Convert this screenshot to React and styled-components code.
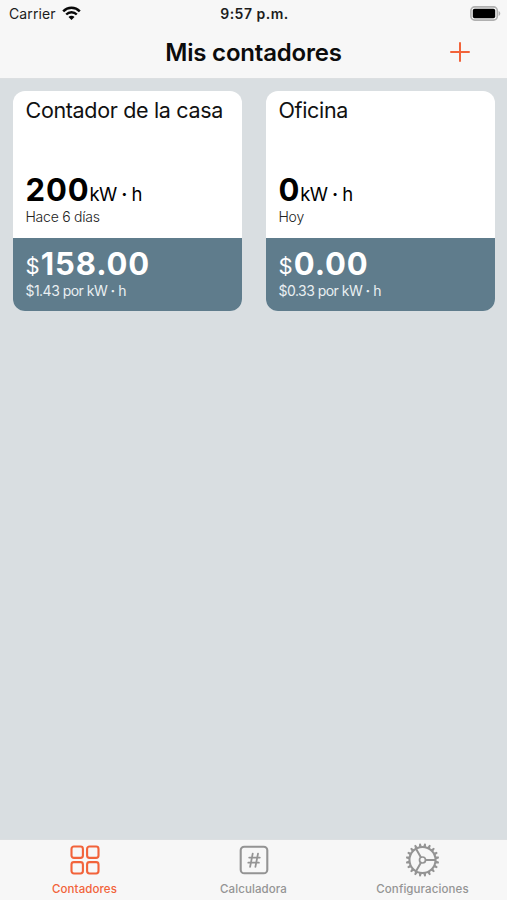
import React, { useState } from 'react';
import styled, { createGlobalStyle } from 'styled-components';

const GlobalStyle = createGlobalStyle`
  * {
    box-sizing: border-box;
  }

  body {
    margin: 0;
    font-family: Inter, "Liberation Sans", sans-serif;
    background: #d9dee1;
  }
`;

const Screen = styled.div`
  display: flex;
  flex-direction: column;
  height: 100vh;
  overflow: hidden;
  background: #d9dee1;
`;

const Header = styled.header`
  height: 79px;
  background: #f7f7f7;
  border-bottom: 1px solid #dcdfe1;
`;

const StatusBar = styled.div`
  display: grid;
  grid-template-columns: 1fr auto 1fr;
  align-items: center;
  height: 28px;
  padding: 0 7px 0 9px;
  font-size: 14px;
  line-height: 28px;
  color: #1c1c1c;
`;

const Carrier = styled.div`
  display: flex;
  align-items: center;
  gap: 6px;
  letter-spacing: 0.1px;

  svg {
    margin-bottom: 2px;
  }
`;

const Clock = styled.div`
  font-weight: 600;
  letter-spacing: 0.5px;
`;

const BatterySlot = styled.div`
  display: flex;
  justify-content: flex-end;
  margin: -2px -1px 0 0;
`;

const NavBar = styled.div`
  display: grid;
  grid-template-columns: 1fr auto 1fr;
  align-items: center;
  height: 48px;
  padding: 0 36px;
`;

const Title = styled.h1`
  grid-column: 2;
  margin: 0;
  padding-top: 1px;
  font-size: 24px;
  font-weight: 600;
  line-height: 48px;
  letter-spacing: -0.2px;
  color: #0c0c0c;
`;

const AddButton = styled.button`
  justify-self: end;
  display: flex;
  margin-bottom: 2px;
  padding: 0;
  border: 0;
  background: none;
  color: #f2633a;
`;

const Grid = styled.main`
  flex: 1;
  display: grid;
  grid-template-columns: 1fr 1fr;
  align-content: start;
  gap: 24px;
  padding: 12px 12px 0 13px;
`;

const Card = styled.article`
  height: 220px;
  border-radius: 12px;
  overflow: hidden;
  background: #fff;
`;

const Usage = styled.div`
  display: flex;
  flex-direction: column;
  justify-content: space-between;
  height: 147px;
  padding: 6px 12px 13px 12.5px;
`;

const Cost = styled.div`
  height: 73px;
  padding: 8px 12px 0 12.5px;
  background: #5f7c8c;
  color: #fff;
`;

const CardTitle = styled.h2`
  margin: 0;
  font-size: 21.5px;
  font-weight: 400;
  line-height: 27px;
  letter-spacing: -0.33px;
  color: #111;
  white-space: nowrap;
`;

const Amount = styled.div`
  height: 36px;
  font-size: 31px;
  font-weight: 700;
  line-height: 36px;
  letter-spacing: 0.9px;
  white-space: nowrap;
`;

const Unit = styled.span`
  font-size: 18.5px;
  font-weight: 400;
  letter-spacing: -0.6px;
`;

const Dot = styled.span`
  font-weight: 700;
`;

const Currency = styled.span`
  margin-right: 1.2px;
  font-size: 22px;
  font-weight: 400;
  letter-spacing: 0;
  vertical-align: 1px;
  line-height: 1;
`;

const Note = styled.div`
  font-size: 14px;
  font-weight: ${(props) => (props.$light ? 400 : 300)};
  line-height: 17px;
  letter-spacing: ${(props) => (props.$light ? '-0.53px' : '-0.25px')};
  color: ${(props) => (props.$light ? '#e9eff2' : '#222')};
`;

const TabBar = styled.nav`
  display: grid;
  grid-template-columns: repeat(3, 1fr);
  height: 61px;
  background: #f7f7f7;
  border-top: 1px solid #dcdfe1;
`;

const Tab = styled.button`
  display: flex;
  flex-direction: column;
  align-items: center;
  padding: 2px 0 0;
  border: 0;
  background: none;
  font-family: inherit;
  font-size: 11.5px;
  font-weight: 500;
  line-height: 16px;
  letter-spacing: 0.1px;
  color: ${(props) => (props.$active ? '#f2633a' : '#949494')};

  svg {
    margin-bottom: 3px;
  }
`;

const WifiIcon = () => (
  <svg width="19" height="15" viewBox="0 0 19 15" fill="none" stroke="#080808">
    <path d="M1.2 5.3a11.7 11.7 0 0 1 16.6 0" strokeWidth="2.5" />
    <path d="M4.2 8.5a7.5 7.5 0 0 1 10.6 0" strokeWidth="2.4" />
    <path d="M9.5 14l-3-3.1a4.2 4.2 0 0 1 6 0z" fill="#080808" stroke="none" />
  </svg>
);

const BatteryIcon = () => (
  <svg width="31" height="15" viewBox="0 0 31 15">
    <rect x="0.9" y="0.9" width="26.4" height="13.2" rx="3.8" fill="#f7f7f7" stroke="#b0b0b0" strokeWidth="1.6" />
    <rect x="2.8" y="2.8" width="22.4" height="9.4" rx="1.8" fill="#000" />
    <path d="M28.6 5c2.2 1 2.2 4 0 5z" fill="#b0b0b0" />
  </svg>
);

const PlusIcon = () => (
  <svg width="22" height="22" viewBox="0 0 22 22" stroke="currentColor" strokeWidth="2" strokeLinecap="round">
    <path d="M11 2v18M2 11h18" />
  </svg>
);

const GridIcon = () => (
  <svg width="36" height="36" viewBox="0 0 36 36" fill="none" stroke="currentColor" strokeWidth="2.1">
    <rect x="4.5" y="4.5" width="11.4" height="11.4" rx="2.4" />
    <rect x="20.1" y="4.5" width="11.4" height="11.4" rx="2.4" />
    <rect x="4.5" y="20.1" width="11.4" height="11.4" rx="2.4" />
    <rect x="20.1" y="20.1" width="11.4" height="11.4" rx="2.4" />
  </svg>
);

const HashIcon = () => (
  <svg width="36" height="36" viewBox="0 0 36 36" fill="none" stroke="currentColor" strokeLinecap="round">
    <rect x="4.7" y="4.7" width="26.6" height="26.6" rx="3.6" strokeWidth="2.1" />
    <path d="M16.7 11.6l-2.6 13.2M22 11.6l-2.6 13.2M13.2 15.6h10.6M12.3 20.7h10.6" strokeWidth="1.8" />
  </svg>
);

const TEETH = Array.from({ length: 20 }, (_, i) => i * 18 + 9);

const GearIcon = () => (
  <svg width="36" height="36" viewBox="0.5 0 36 36" fill="none" stroke="currentColor">
    <circle cx="18" cy="18" r="13" strokeWidth="2" />
    {TEETH.map((angle) => (
      <path key={angle} d="M16.5 4.7l.7-3.3h1.6l.7 3.3z" fill="currentColor" stroke="none" transform={`rotate(${angle} 18 18)`} />
    ))}
    <circle cx="18" cy="18" r="3" strokeWidth="1.7" />
    <path d="M21 18h10M16.5 15.4l-5-8.7M16.5 20.6l-5 8.7" strokeWidth="2" />
  </svg>
);

const meters = [
  { name: 'Contador de la casa', usage: '200', date: 'Hace 6 días', cost: '158.00', rate: '$1.43' },
  { name: 'Oficina', usage: '0', date: 'Hoy', cost: '0.00', rate: '$0.33' },
];

const tabs = [
  { label: 'Contadores', Icon: GridIcon },
  { label: 'Calculadora', Icon: HashIcon },
  { label: 'Configuraciones', Icon: GearIcon },
];

const MeterCard = ({ meter }) => (
  <Card>
    <Usage>
      <CardTitle>{meter.name}</CardTitle>
      <div>
        <Amount>
          {meter.usage}
          <Unit>
            kW <Dot>·</Dot> h
          </Unit>
        </Amount>
        <Note>{meter.date}</Note>
      </div>
    </Usage>
    <Cost>
      <Amount>
        <Currency>$</Currency>
        {meter.cost}
      </Amount>
      <Note $light>
        {meter.rate} por kW <Dot>·</Dot> h
      </Note>
    </Cost>
  </Card>
);

const App = () => {
  const [active, setActive] = useState('Contadores');

  return (
    <Screen>
      <GlobalStyle />
      <Header>
        <StatusBar>
          <Carrier>
            Carrier
            <WifiIcon />
          </Carrier>
          <Clock>9:57 p.m.</Clock>
          <BatterySlot>
            <BatteryIcon />
          </BatterySlot>
        </StatusBar>
        <NavBar>
          <Title>Mis contadores</Title>
          <AddButton aria-label="Agregar">
            <PlusIcon />
          </AddButton>
        </NavBar>
      </Header>
      <Grid>
        {meters.map((meter) => (
          <MeterCard key={meter.name} meter={meter} />
        ))}
      </Grid>
      <TabBar>
        {tabs.map(({ label, Icon }) => (
          <Tab key={label} $active={label === active} onClick={() => setActive(label)}>
            <Icon />
            {label}
          </Tab>
        ))}
      </TabBar>
    </Screen>
  );
};

export default App;
